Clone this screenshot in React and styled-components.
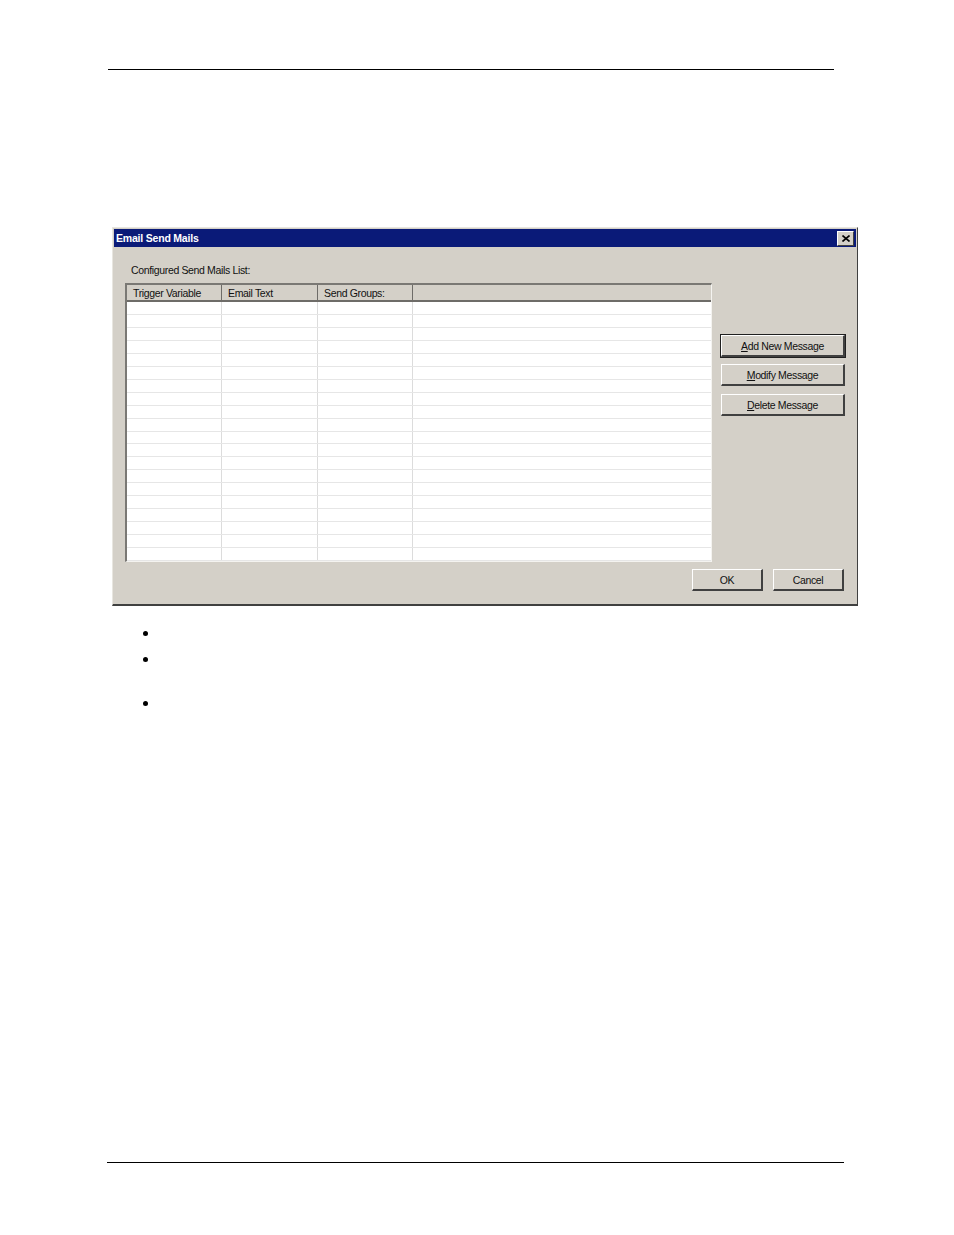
import React from 'react';
import styled, { createGlobalStyle } from 'styled-components';

const GlobalStyle = createGlobalStyle`
  html, body {
    margin: 0;
    padding: 0;
    background: #ffffff;
  }
  body {
    font-family: "Liberation Sans", Arial, sans-serif;
  }
`;

const Page = styled.div`
  width: 954px;
  height: 1235px;
  display: flex;
  flex-direction: column;
  padding-top: 69px;
  box-sizing: border-box;
`;

const Rule = styled.div`
  height: 1px;
  background: #000;
  margin-left: ${p => p.left}px;
  width: ${p => p.width}px;
`;

const Dialog = styled.div`
  margin-top: 157px;
  margin-left: 112px;
  width: 746px;
  height: 379px;
  box-sizing: border-box;
  background: #d4d0c8;
  border-top: 1px solid #e8e6e0;
  border-left: 1px solid #e8e6e0;
  border-right: 1px solid #404040;
  border-bottom: 2px solid #404040;
  padding: 1px;
  display: flex;
  flex-direction: column;
  font-family: "Liberation Sans", Arial, sans-serif;
  font-size: 10.5px;
  color: #111;
`;

const TitleBar = styled.div`
  height: 18px;
  background: #0a1a78;
  display: flex;
  align-items: center;
  justify-content: space-between;
  padding: 0 2px 0 2px;
`;

const Title = styled.span`
  color: #fff;
  font-weight: bold;
  font-size: 10.5px;
  letter-spacing: -0.2px;
`;

const CloseBox = styled.div`
  width: 15px;
  height: 13px;
  background: #d4d0c8;
  border-top: 1px solid #fff;
  border-left: 1px solid #fff;
  border-right: 1px solid #404040;
  border-bottom: 1px solid #404040;
  display: flex;
  align-items: center;
  justify-content: center;
`;

const Content = styled.div`
  flex: 1;
  display: grid;
  grid-template-columns: 587px 124px;
  grid-template-rows: auto 1fr auto;
  column-gap: 9px;
  padding: 0 0 0 11px;
`;

const Label = styled.div`
  grid-column: 1 / 3;
  padding: 17px 0 7px 6px;
  letter-spacing: -0.35px;
`;

const List = styled.div`
  width: 587px;
  height: 279px;
  box-sizing: border-box;
  background: #fff;
  border-top: 2px solid #7a7874;
  border-left: 2px solid #7a7874;
  border-right: 1px solid #f4f3f0;
  border-bottom: 1px solid #f4f3f0;
  overflow: hidden;
  display: flex;
  flex-direction: column;
`;

const columns = '95px 96px 95px 1fr';

const HeaderRow = styled.div`
  display: grid;
  grid-template-columns: ${columns};
  height: 15px;
  background: #d4d0c8;
  border-bottom: 2px solid #6e6c68;
`;

const HeaderCell = styled.div`
  border-right: ${p => (p.last ? 'none' : '1px solid #6e6c68')};
  padding-left: 6px;
  line-height: 17px;
  letter-spacing: -0.35px;
  white-space: nowrap;
`;

const Row = styled.div`
  display: grid;
  grid-template-columns: ${columns};
  height: 13.33px;
  box-sizing: border-box;
  border-bottom: 1px solid #e6e6e6;
`;

const Cell = styled.div`
  border-right: ${p => (p.last ? 'none' : '1px solid #dcdcdc')};
`;

const SideButtons = styled.div`
  display: flex;
  flex-direction: column;
  padding-top: 52px;
  gap: 7px;
`;

const Button = styled.button`
  width: ${p => p.w}px;
  height: ${p => p.h || 22}px;
  box-sizing: border-box;
  background: #d4d0c8;
  font-family: "Liberation Sans", Arial, sans-serif;
  font-size: 10.5px;
  letter-spacing: -0.35px;
  color: #111;
  padding: 0;
  border-top: 1px solid #fff;
  border-left: 1px solid #fff;
  border-right: 2px solid #404040;
  border-bottom: 2px solid #404040;
  outline: ${p => (p.primary ? '1px solid #202020' : 'none')};
  outline-offset: 0;
  margin-top: ${p => p.mt || 0}px;
  u {
    text-decoration: underline;
  }
`;

const Footer = styled.div`
  grid-column: 1 / 3;
  display: flex;
  justify-content: flex-end;
  gap: 10px;
  padding: 7px 1px 12px 0;
`;

const Bullets = styled.div`
  margin-left: 143px;
  margin-top: 23px;
  display: flex;
  flex-direction: column;
`;

const Bullet = styled.div`
  height: ${p => p.h}px;
  display: flex;
  align-items: flex-start;
  &::before {
    content: '';
    width: 5px;
    height: 5px;
    border-radius: 50%;
    background: #000;
    margin-top: 2px;
  }
`;

const Spacer = styled.div`
  flex: 1;
`;

const BottomGap = styled.div`
  height: 72px;
`;

const rows = Array.from({ length: 20 });

export default function App() {
  return (
    <>
      <GlobalStyle />
      <Page>
        <Rule left={108} width={726} />
        <Dialog>
          <TitleBar>
            <Title>Email Send Mails</Title>
            <CloseBox>
              <svg width="8" height="7" viewBox="0 0 8 7">
                <path d="M0.5 0.5 L7.5 6.5 M7.5 0.5 L0.5 6.5" stroke="#000" strokeWidth="1.6" />
              </svg>
            </CloseBox>
          </TitleBar>
          <Content>
            <Label>Configured Send Mails List:</Label>
            <List>
              <HeaderRow>
                <HeaderCell>Trigger Variable</HeaderCell>
                <HeaderCell>Email Text</HeaderCell>
                <HeaderCell>Send Groups:</HeaderCell>
                <HeaderCell last />
              </HeaderRow>
              {rows.map((_, i) => (
                <Row key={i}>
                  <Cell />
                  <Cell />
                  <Cell />
                  <Cell last />
                </Row>
              ))}
            </List>
            <SideButtons>
              <Button w={124} primary>
                <u>A</u>dd New Message
              </Button>
              <Button w={124}>
                <u>M</u>odify Message
              </Button>
              <Button w={124} mt={1}>
                <u>D</u>elete Message
              </Button>
            </SideButtons>
            <Footer>
              <Button w={71}>OK</Button>
              <Button w={71}>Cancel</Button>
            </Footer>
          </Content>
        </Dialog>
        <Bullets>
          <Bullet h={26} />
          <Bullet h={44} />
          <Bullet h={26} />
        </Bullets>
        <Spacer />
        <Rule left={107} width={737} />
        <BottomGap />
      </Page>
    </>
  );
}
